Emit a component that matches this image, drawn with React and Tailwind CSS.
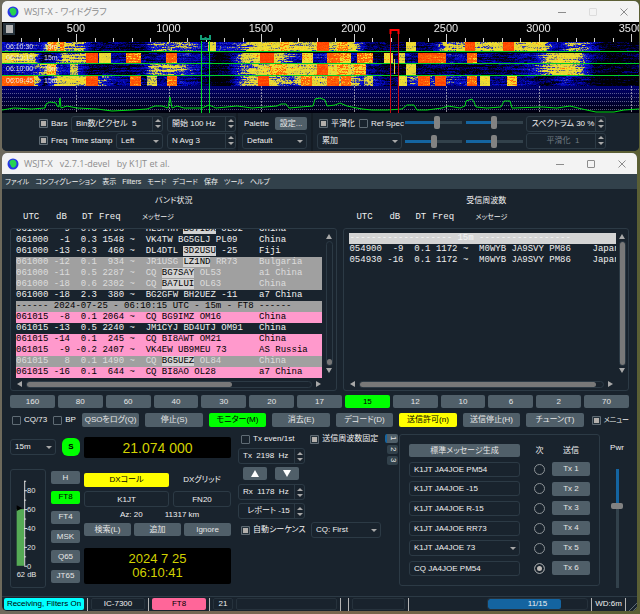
import React, { useEffect, useRef, useState } from 'react';

const CANVAS_W = 637;

// one entry per 15 s period: background level by x, then the strong signals
const STRIPS = [
    {
        top: 0, height: 9, label: '06:10:30',
        base: [[0, 0.34], [38, 0.36], [48, 0.6], [80, 0.5], [92, 0.2], [140, 0.16], [152, 0.5], [185, 0.48], [200, 0.32], [235, 0.38], [262, 0.64], [300, 0.58], [350, 0.6], [365, 0.2], [400, 0.12], [430, 0.2], [445, 0.56], [540, 0.6], [556, 0.26], [568, 0.5], [585, 0.42], [600, 0.12], [637, 0.08]],
        hot: [[46, 54, 0.78], [58, 61, 0.8], [206, 213, 0.6], [278, 286, 0.72], [315, 326, 0.95], [335, 345, 0.76], [404, 413, 0.62], [463, 472, 0.92], [501, 511, 0.95]],
    },
    {
        top: 11, height: 10, label: '06:10:15',
        base: [[0, 0.64], [32, 0.6], [40, 0.16], [50, 0.28], [62, 0.56], [84, 0.52], [96, 0.26], [120, 0.26], [150, 0.22], [180, 0.34], [205, 0.22], [215, 0.04], [225, 0.08], [240, 0.52], [262, 0.68], [278, 0.58], [296, 0.3], [330, 0.34], [360, 0.28], [380, 0.08], [400, 0.24], [440, 0.34], [458, 0.3], [500, 0.18], [530, 0.3], [545, 0.56], [560, 0.64], [575, 0.58], [590, 0.2], [605, 0.06], [637, 0.14]],
        hot: [[84, 95, 0.93], [97, 108, 0.6], [124, 138, 0.8], [164, 174, 0.84], [258, 271, 1], [300, 310, 0.68], [325, 337, 0.82], [338, 348, 0.74], [355, 370, 0.8], [382, 390, 0.66], [396, 402, 0.57], [416, 426, 0.9], [427, 443, 0.88], [465, 474, 0.82]],
    },
    {
        top: 22, height: 11, label: '06:10:00',
        base: [[0, 0.28], [30, 0.34], [45, 0.54], [60, 0.34], [75, 0.42], [90, 0.14], [125, 0.18], [143, 0.3], [150, 0.54], [180, 0.5], [200, 0.22], [212, 0.06], [225, 0.14], [240, 0.5], [270, 0.65], [300, 0.62], [350, 0.62], [368, 0.24], [400, 0.1], [430, 0.18], [500, 0.16], [530, 0.32], [548, 0.58], [565, 0.66], [578, 0.54], [592, 0.18], [606, 0.06], [637, 0.18]],
        hot: [[45, 53, 0.74], [68, 75, 0.56], [268, 284, 0.76], [315, 325, 0.9], [335, 345, 0.74], [352, 363, 0.76], [404, 413, 0.6]],
    },
    {
        top: 34, height: 10, label: '06:09:45',
        base: [[0, 0.7], [34, 0.62], [42, 0.14], [55, 0.58], [84, 0.6], [98, 0.44], [115, 0.26], [140, 0.22], [175, 0.3], [205, 0.18], [215, 0.02], [225, 0.06], [242, 0.54], [262, 0.63], [290, 0.42], [300, 0.62], [350, 0.54], [375, 0.28], [392, 0.12], [410, 0.46], [450, 0.36], [480, 0.28], [520, 0.3], [545, 0.1], [560, 0.32], [580, 0.22], [600, 0.02], [637, 0.06]],
        hot: [[0, 31, 0.86], [84, 95, 0.9], [128, 138, 0.86], [145, 154, 0.57], [165, 174, 0.8], [256, 266, 0.96], [299, 309, 0.82], [325, 336, 0.88], [339, 348, 0.84], [362, 370, 0.57], [396, 404, 0.62], [416, 427, 0.88], [433, 443, 0.94], [465, 474, 0.84], [478, 487, 0.64], [505, 514, 0.74]],
    },
];

const PALETTE = [[0, 0, 0, 0], [0.1, 0, 0, 8], [0.26, 0, 0, 140], [0.42, 10, 20, 225], [0.48, 100, 105, 130], [0.55, 220, 210, 60], [0.72, 250, 225, 45], [0.79, 255, 110, 10], [1, 255, 60, 0]];

const levelAt = (points, x) => {
    for (let i = 1; i < points.length; i++) {
        if (x <= points[i][0]) {
            const [x0, a] = points[i - 1];
            const [x1, b] = points[i];
            return a + ((b - a) * (x - x0)) / (x1 - x0);
        }
    }
    return points[points.length - 1][1];
};

const colorAt = (v) => {
    const c = Math.max(0, Math.min(1, v));
    for (let i = 1; i < PALETTE.length; i++) {
        if (c <= PALETTE[i][0]) {
            const p = PALETTE[i - 1];
            const q = PALETTE[i];
            const t = (c - p[0]) / (q[0] - p[0]);
            return [1, 2, 3].map((k) => p[k] + (q[k] - p[k]) * t);
        }
    }
    return [255, 60, 0];
};

const Waterfall = () => {
    const ref = useRef(null);

    useEffect(() => {
        const ctx = ref.current.getContext('2d');
        const img = ctx.createImageData(CANVAS_W, 44);
        let seed = 7;
        const rand = () => {
            seed = (seed * 1664525 + 1013904223) % 4294967296;
            return seed / 4294967296;
        };
        STRIPS.forEach(({ top, height, base, hot }) => {
            for (let y = top; y < top + height; y++) {
                let streak = 0;
                for (let x = 0; x < CANVAS_W; x++) {
                    if (rand() < 0.14) streak = (rand() - 0.5) * 0.22;
                    const band = hot.find(([a, b]) => x >= a && x <= b);
                    const level = band ? band[2] : levelAt(base, x);
                    const v = level + (band ? streak * 0.6 : streak) + (rand() - 0.5) * 0.15;
                    const [r, g, b] = colorAt(v);
                    img.data.set([r, g, b, 255], (y * CANVAS_W + x) * 4);
                }
            }
        });
        ctx.putImageData(img, 0, 0);
    }, []);

    return <canvas ref={ref} width={CANVAS_W} height={44} className="absolute top-5 left-0 w-full h-11 bg-black" />;
};

const SPECTRUM = [[0, 88], [12, 86], [30, 87], [43, 86], [44, 82], [48, 80], [54, 81], [55, 84], [57, 85], [58, 76], [59, 86], [65, 84], [75, 86], [95, 87], [110, 89], [130, 88], [145, 87], [153, 84], [160, 84], [166, 86], [168, 75], [170, 86], [175, 84], [182, 86], [200, 86], [207, 83], [214, 86], [235, 84], [250, 86], [275, 84], [279, 82], [284, 82], [287, 86], [311, 84], [313, 77], [318, 76], [323, 78], [325, 84], [333, 83], [338, 81], [345, 84], [360, 87], [370, 88], [385, 88], [400, 87], [405, 83], [412, 83], [415, 88], [425, 88], [440, 86], [446, 84], [458, 86], [463, 84], [464, 79], [470, 77], [472, 80], [474, 85], [485, 86], [499, 85], [502, 79], [508, 79], [510, 86], [540, 85], [555, 86], [568, 84], [580, 87], [594, 90], [612, 90], [622, 88], [637, 87]];

const WideGraph = () => {
    const hzToX = (hz) => 74 + (hz - 500) * 0.185;
    const ticks = Array.from({ length: 34 }, (_, i) => 200 + i * 100);
    const major = [500, 1000, 1500, 2000, 2500, 3000, 3500];
    const trace = SPECTRUM.map(([x, y]) => `${x},${y}`).join(' ');

    return (
        <div className="relative bg-black overflow-hidden">
            <Waterfall />
            <svg viewBox="0 0 637 91" className="relative block w-full" fontFamily="Liberation Sans, sans-serif">
                <defs>
                    <linearGradient id="spec" x1="0" y1="0" x2="0" y2="1">
                        <stop offset="0" stopColor="#00006e" />
                        <stop offset="1" stopColor="#00000c" />
                    </linearGradient>
                </defs>
                <rect x="1" y="1" width="12" height="12" fill="#26323b" />
                <rect x="4" y="3" width="7" height="8" fill="#b4b4b4" />
                {major.map((hz) => (
                    <text key={hz} x={hzToX(hz)} y="10" fontSize="11" fill="#e6e6e6" textAnchor="middle">{hz}</text>
                ))}
                {ticks.map((hz) => (
                    <rect key={hz} x={Math.round(hzToX(hz))} y={hz % 500 ? 16 : 12} width="1" height={hz % 500 ? 4 : 8} fill="#d0d0d0" />
                ))}
                {[29, 41, 53].map((y) => (
                    <rect key={y} x="0" y={y} width="637" height="1" fill="#00d228" />
                ))}
                {STRIPS.map((s) => (
                    <g key={s.label} fontSize="7" fill="#f0f0f0" opacity=".9">
                        <text x="4" y={s.top + 27}>{s.label}</text>
                        <text x="42" y={s.top + 27}>15m</text>
                    </g>
                ))}
                <rect x="0" y="64" width="637" height="27" fill="url(#spec)" />
                {[67, 71, 75, 79, 83, 87].map((y) => (
                    <path key={y} d={`M0 ${y}.5H637`} stroke="#8c8cb4" strokeDasharray="1 1" opacity=".65" />
                ))}
                {major.map((hz) => (
                    <path key={hz} d={`M${Math.round(hzToX(hz))}.5 64V91`} stroke="#c0c0c8" strokeDasharray="2 1" opacity=".7" />
                ))}
                <polyline points={trace} fill="none" stroke="#00dc14" strokeWidth="1" />
                <path d="M199.5 19V91M207.5 19V91" stroke="#00dc28" />
                <path d="M199 13v4h9v-4M203.500 17v-2" fill="none" stroke="#14a078" strokeWidth="2" />
                <path d="M388.500 8V91M396.500 8V91" stroke="#c80a14" />
                <path d="M388.500 12V8h8v4" fill="none" stroke="#ff0000" strokeWidth="2" />
                <path d="M392.500 37v15" stroke="#f0c83c" />
            </svg>
        </div>
    );
};

const Globe = () => (
    <svg viewBox="0 0 12 12" className="w-3 h-3 shrink-0">
        <circle cx="6" cy="6" r="5.500" fill="#2837e6" />
        <path d="M3.500 2.500C5 1 8 1.500 9 3.500c1 2 .5 4-1 5.500C6.500 10.500 4.500 9.500 4 8 3.500 6.500 2.500 6 2.500 4.500 2.500 3.500 3 3 3.500 2.500z" fill="#28d250" />
    </svg>
);

const TitleBar = ({ title, dimMax }) => (
    <header className="flex items-center h-[21px] pl-[5px] gap-[5px] bg-[#f3f3f3] text-[#8c8c8c]">
        <Globe />
        <h1 className="text-[9px] font-['Open_Sans','Noto_Sans_CJK_JP',sans-serif] whitespace-pre leading-none flex-1">{title}</h1>
        <div className="flex">
            <button aria-label="Minimize" className="w-[31px] flex justify-center">
                <svg viewBox="0 0 8 8" className="w-2 h-2"><path d="M0 4.500h8" stroke="currentColor" /></svg>
            </button>
            <button aria-label="Maximize" className={`w-[31px] flex justify-center ${dimMax ? 'text-[#dcdcdc]' : ''}`}>
                <svg viewBox="0 0 8 8" className="w-2 h-2"><rect x=".5" y=".5" width="7" height="7" rx=".5" fill="none" stroke="currentColor" /></svg>
            </button>
            <button aria-label="Close" className="w-[31px] flex justify-center">
                <svg viewBox="0 0 8 8" className="w-2 h-2"><path d="M.5.5l7 7M7.500.5l-7 7" stroke="currentColor" /></svg>
            </button>
        </div>
    </header>
);

const Check = ({ label, checked = false, className = '' }) => (
    <label className={`flex items-center gap-[3px] whitespace-nowrap ${className}`}>
        <input
            type="checkbox"
            defaultChecked={checked}
            className="appearance-none w-[9px] h-[9px] shrink-0 border border-[#5f6b74] rounded-[1px] checked:bg-[#b4b0ac] checked:shadow-[inset_0_0_0_1px_#26323b]"
        />
        {label}
    </label>
);

const Spin = ({ label, value, className = '', center = false, disabled = false }) => {
    const [text, setText] = useState(value);
    return (
        <span className={`flex h-4 border border-[#2c3a45] rounded-[3px] ${disabled ? 'text-[#6f7a82]' : ''} ${className}`}>
            <input
                aria-label={label}
                value={text}
                disabled={disabled}
                onChange={(e) => setText(e.target.value)}
                className={`flex-1 min-w-0 bg-transparent outline-none pl-1 ${center ? 'text-center' : ''}`}
            />
            <span className="flex flex-col justify-center gap-[3px] w-[10px] border-l border-[#2c3a45] text-[#a8a8a8]">
                <button aria-label={`${label} up`} className="flex justify-center">
                    <svg viewBox="0 0 6 3" className="w-[6px] h-[3px]"><path d="M0 3L3 0l3 3z" fill="currentColor" /></svg>
                </button>
                <button aria-label={`${label} down`} className="flex justify-center">
                    <svg viewBox="0 0 6 3" className="w-[6px] h-[3px]"><path d="M0 0l3 3 3-3z" fill="currentColor" /></svg>
                </button>
            </span>
        </span>
    );
};

const Select = ({ label, value, className = '' }) => (
    <span className={`relative flex h-4 ${className}`}>
        <select aria-label={label} className="appearance-none w-full min-w-0 pl-1 border border-[#2c3a45] rounded-[3px] bg-transparent outline-none">
            <option>{value}</option>
        </select>
        <svg viewBox="0 0 6 3" className="absolute right-[4px] top-[7px] w-[6px] h-[3px] pointer-events-none"><path d="M0 0l3 3 3-3z" fill="#a8a8a8" /></svg>
    </span>
);

const Btn = ({ children, className = '', tone = 'bg-[#505f69] text-[#e6e6e6]', ...rest }) => (
    <button className={`flex items-center justify-center rounded-[2px] whitespace-nowrap leading-none ${tone} ${className}`} {...rest}>
        {children}
    </button>
);

const GREEN = 'bg-[#00ff00] text-black';
const YELLOW = 'bg-[#ffff00] text-black';

const Slider = ({ label, value }) => {
    const [v, setV] = useState(value);
    return (
        <input
            type="range"
            aria-label={label}
            value={v}
            onChange={(e) => setV(Number(e.target.value))}
            style={{ backgroundImage: `linear-gradient(to right, #1464a0 ${v}%, #32414b ${v}%)` }}
            className="appearance-none w-[57px] h-[3px] [&::-webkit-slider-thumb]:appearance-none [&::-webkit-slider-thumb]:w-[6px] [&::-webkit-slider-thumb]:h-[13px] [&::-webkit-slider-thumb]:rounded-[2px] [&::-webkit-slider-thumb]:bg-[#828282]"
        />
    );
};

const PowerSlider = () => {
    const [v, setV] = useState(30);
    return (
        <input
            id="pwr"
            type="range"
            value={v}
            onChange={(e) => setV(Number(e.target.value))}
            style={{ backgroundImage: `linear-gradient(to bottom, #1464a0 ${v}%, #32414b ${v}%)` }}
            className="appearance-none mt-[15px] w-[3px] h-[119px] [writing-mode:vertical-lr] [&::-webkit-slider-thumb]:appearance-none [&::-webkit-slider-thumb]:w-[12px] [&::-webkit-slider-thumb]:h-[6px] [&::-webkit-slider-thumb]:rounded-[2px] [&::-webkit-slider-thumb]:bg-[#828282]"
        />
    );
};

const WideGraphControls = () => (
    <div className="flex pl-9 h-[38px] bg-[#19232d]">
        <div className="flex flex-col justify-center gap-[1px] w-[198px]">
            <div className="flex items-center gap-1">
                <span className="w-[28px] ml-[1px]"><Check label="Bars" checked /></span>
                <Spin label="Bins per pixel" value="Bin数/ピクセル  5" className="w-[92px]" />
                <Spin label="Start" value="開始 100 Hz" className="w-[69px]" />
            </div>
            <div className="flex items-center gap-1">
                <span className="w-[28px] ml-[1px]"><Check label="Freq" checked /></span>
                <span className="w-[41px] whitespace-nowrap">Time stamp</span>
                <Select label="Time stamp" value="Left" className="w-[47px]" />
                <Spin label="N Avg" value="N Avg 3" className="w-[69px]" />
            </div>
        </div>
        <div className="flex flex-col justify-center gap-[1px] px-1 w-[75px] border-l-2 border-[#141c24]">
            <div className="flex items-center justify-between h-4 pl-[2px]">
                <span>Palette</span>
                <Btn className="w-8 h-[13px]">設定...</Btn>
            </div>
            <Select label="Palette" value="Default" />
        </div>
        <div className="flex flex-col justify-center gap-[1px] pl-1 w-[93px] border-l-2 border-[#141c24]">
            <div className="flex items-center h-4 gap-1 pl-[2px]">
                <Check label="平滑化" checked />
                <Check label="Ref Spec" />
            </div>
            <Select label="Spectrum type" value="累加" className="w-[85px]" />
        </div>
        <div className="grid grid-cols-2 gap-x-1 items-center w-[118px] pl-[1px]">
            <Slider label="Gain" value={56} />
            <Slider label="Spectrum gain" value={50} />
            <Slider label="Zero" value={50} />
            <Slider label="Spectrum zero" value={50} />
        </div>
        <div className="flex flex-col justify-center gap-[1px] pl-1">
            <Spin label="Spectrum" value="スペクトラム 30 %" className="w-[80px]" center />
            <Spin label="Smoothing" value="平滑化  1" className="w-[80px]" center disabled />
        </div>
    </div>
);

const PINK = 'bg-[#ff99cc] text-black';
const GRAY = 'bg-[#a0a0a0] text-[#dcdcdc]';

// utc, dB, DT, Freq, [before, call, after], country, row colours
const BAND_ROWS = [
    ['061000', '9', '0.3', '1796', ['HL5FHH ', 'BG7IDX', ' OL62'], '   China', ''],
    ['061000', '-1', '0.3', '1548', ['VK4TW BG5GLJ PL09', '', ''], '   China', ''],
    ['061000', '-13', '-0.3', '460', ['DL4DTL ', '3D2USU', ' -25'], '   Fiji', ''],
    ['061000', '-12', '0.1', '934', ['JR1USG ', 'LZ1ND', ' RR73'], '   Bulgaria', GRAY],
    ['061000', '-11', '0.5', '2287', ['CQ ', 'BG7SAY', ' OL53'], '   a1 China', GRAY],
    ['061000', '-18', '0.6', '2302', ['CQ ', 'BA7LUI', ' OL63'], '   China', GRAY],
    ['061000', '-18', '2.3', '380', ['BG2GFW BH2UEZ -11', '', ''], '   a7 China', ''],
    ['sep', '------ 2024-07-25 - 06:10:15 UTC - 15m - FT8 ------', 'bg-[#a0a0a0] text-black'],
    ['061015', '-8', '0.1', '2064', ['CQ BG9IMZ OM16', '', ''], '   China', PINK],
    ['061015', '-13', '0.5', '2240', ['JM1CYJ BD4UTJ OM91', '', ''], '   China', ''],
    ['061015', '-14', '0.1', '245', ['CQ BI8AWT OM21', '', ''], '   China', PINK],
    ['061015', '-9', '-0.2', '2407', ['VK4EW UB9MEU 73', '', ''], '   AS Russia', PINK],
    ['061015', '8', '0.1', '1490', ['CQ ', 'BG5UEZ', ' OL84'], '   China', GRAY],
    ['061015', '-16', '0.1', '644', ['CQ BI8AO OL28', '', ''], '   a7 China', PINK],
];

const RX_ROWS = [
    ['sep', '------------------- 15m -----------------', 'bg-[#d4d4d4] text-[#f5f5f5]'],
    ['054900', '-9', '0.1', '1172', ['M0WYB JA9SVY PM86', '', ''], '    Japan', ''],
    ['054930', '-16', '0.1', '1172', ['M0WYB JA9SVY PM86', '', ''], '    Japan', ''],
];

const DecodeTable = ({ rows, label }) => (
    <table aria-label={label} className="w-full border-collapse font-['Liberation_Mono',monospace] text-[9px] leading-[11px] whitespace-pre">
        <tbody>
            {rows.map((r, i) =>
                r[0] === 'sep' ? (
                    <tr key={i} className={r[2]}>
                        <td colSpan={6} className="p-0">{r[1]}</td>
                    </tr>
                ) : (
                    <tr key={i} className={r[6]}>
                        <td className="p-0">{r[0]}</td>
                        <td className="p-0">{r[1].padStart(4)}</td>
                        <td className="p-0">{r[2].padStart(5)}</td>
                        <td className="p-0">{r[3].padStart(5)}</td>
                        <td className="p-0">
                            {' ~  '}{r[4][0]}
                            {r[4][1] && <span className="bg-[#d2d2d2] text-black">{r[4][1]}</span>}
                            {r[4][2]}
                        </td>
                        <td className="p-0 w-full">{r[5]}</td>
                    </tr>
                )
            )}
        </tbody>
    </table>
);

const Arrow = ({ d }) => (
    <svg viewBox="0 0 6 6" className="w-[6px] h-[6px] shrink-0"><path d={d} fill="#a8a8a8" /></svg>
);

const DecodePane = ({ title, rows, bottom, full }) => (
    <section className="flex flex-col min-w-0">
        <h2 className="text-center leading-[12px] pt-[6px]">{title}</h2>
        <div className="flex items-center pl-[13px] h-[21px] pt-1 pb-[5px] font-['Liberation_Mono',monospace] text-[9px]">
            <span className="w-[33px]">UTC</span>
            <span className="w-[26px]">dB</span>
            <span className="w-[17px]">DT</span>
            <span className="w-[43px]">Freq</span>
            <span className="text-[7px] font-['Liberation_Sans','Noto_Sans_CJK_JP',sans-serif]">メッセージ</span>
        </div>
        <div className="border border-[#2c3a45] rounded-[3px] pl-[5px]">
            <div className="flex h-[149px]">
                <div className={`flex flex-1 min-w-0 overflow-hidden ${bottom ? 'items-end' : 'items-start pt-1'}`}>
                    <DecodeTable rows={rows} label={title} />
                </div>
                <div className={`flex flex-col items-center py-1 ${full ? 'w-[12px]' : 'w-[14px]'}`}>
                    <Arrow d="M0 6l3-5 3 5z" />
                    <div className={`flex flex-col w-[7px] flex-1 my-[2px] border border-[#2c3a45] rounded-full ${full ? '' : 'justify-end'}`}>
                        <div className={`rounded-full bg-[#787878] ${full ? 'h-full' : 'h-[6px]'}`}></div>
                    </div>
                    <Arrow d="M0 0l3 5 3-5z" />
                </div>
            </div>
            <div className="flex items-center gap-1 h-[12px] pr-[14px]">
                <Arrow d="M6 0L1 3l5 3z" />
                <div className="flex-1 h-[7px] border border-[#2c3a45] rounded-full">
                    <div className={`h-full rounded-full bg-[#787878] ${full ? 'w-[97%]' : 'w-[72%]'}`}></div>
                </div>
                <Arrow d="M0 0l5 3-5 3z" />
            </div>
        </div>
    </section>
);

const Meter = () => (
    <svg viewBox="0 0 36 119" className="w-9 h-[119px] border border-[#2c3a45] rounded-[3px]" fontSize="8" fill="#e6e6e6">
        <rect x="6" y="39" width="8" height="60" fill="#55aa55" />
        <path d="M14.500 9v90" stroke="#e6e6e6" />
        {[80, 60, 40, 20, 0].map((n, i) => (
            <g key={n}>
                <path d={`M14 ${19.5 + i * 20}h3`} stroke="#e6e6e6" />
                <text x="17" y={22 + i * 20}>{n}</text>
            </g>
        ))}
        {[9.5, 29.5, 49.5, 69.5, 89.5].map((y) => (
            <path key={y} d={`M14 ${y}h2`} stroke="#e6e6e6" />
        ))}
        <path d="M6 35l6 3-6 3z" fill="#000" />
        <text x="6" y="111">62 dB</text>
    </svg>
);

const TX_MESSAGES = ['K1JT JA4JOE PM54', 'K1JT JA4JOE -15', 'K1JT JA4JOE R-15', 'K1JT JA4JOE RR73', 'K1JT JA4JOE 73', 'CQ JA4JOE PM54'];

const TxPanel = () => {
    const [next, setNext] = useState(5);
    return (
        <section className="flex-1 min-w-0 h-[152px] px-[9px] py-[9px] border border-[#2c3a45] rounded-[3px]">
            <div className="flex flex-col justify-between h-[132px]">
                <div className="flex items-center">
                    <Btn className="flex-1 h-[13px]">標準メッセージ生成</Btn>
                    <span className="w-8 pl-[7px] text-center">次</span>
                    <span className="w-[38px] text-center">送信</span>
                </div>
                {TX_MESSAGES.map((msg, i) => (
                    <div key={msg} className="flex items-center">
                        {i === 4 ? (
                            <Select label="Tx 5 message" value={msg} className="flex-1 min-w-0" />
                        ) : (
                            <input aria-label={`Tx ${i + 1} message`} defaultValue={msg} className="flex-1 min-w-0 h-[15px] pl-1 border border-[#2c3a45] rounded-[3px] bg-transparent outline-none" />
                        )}
                        <span className="flex justify-center w-8 pl-[7px]">
                            <input
                                type="radio"
                                name="next"
                                aria-label={`Next Tx ${i + 1}`}
                                checked={next === i}
                                onChange={() => setNext(i)}
                                className="appearance-none w-[11px] h-[11px] rounded-full border border-[#8c9296] checked:bg-[#c0bcb8] checked:shadow-[inset_0_0_0_2px_#19232d]"
                            />
                        </span>
                        <Btn className="w-[38px] h-[14px]">Tx {i + 1}</Btn>
                    </div>
                ))}
            </div>
        </section>
    );
};

const Bar = () => <span className="w-px h-[13px] bg-[#b4b4b4]"></span>;

const StatusBar = () => (
    <footer className="flex items-center h-[15px] gap-[3px] pl-[2px] border-t border-[#2c3a45]">
        <span className="flex items-center justify-center w-[80px] h-[12px] rounded-[2px] bg-[#00ffff] text-black whitespace-nowrap">Receiving, Filters On</span>
        <Bar />
        <span className="flex items-center justify-center w-[54px] h-[12px] rounded-[2px] border border-[#26323c]">IC-7300</span>
        <Bar />
        <span className="flex items-center justify-center w-[54px] h-[12px] rounded-[2px] bg-[#ff6699] text-black">FT8</span>
        <Bar />
        <span className="flex items-center justify-center w-[20px] h-[12px] rounded-[2px] border border-[#26323c]">21</span>
        <span className="w-[101px] h-[12px] rounded-[2px] border border-[#26323c]"></span>
        <Bar />
        <span className="w-[1px]"></span>
        <Bar />
        <span className="w-[53px] h-[12px] rounded-[2px] border border-[#26323c]"></span>
        <Bar />
        <span className="flex-1"></span>
        <span className="relative flex items-center justify-center w-[101px] h-[12px] rounded-[3px] border border-[#26323c] overflow-hidden">
            <span className="absolute inset-y-0 left-0 bg-[#1464a0] rounded-[2px]" style={{ width: `${(11 / 15) * 100}%` }}></span>
            <span className="relative">11/15</span>
        </span>
        <Bar />
        <span className="w-[27px] text-center whitespace-nowrap">WD:6m</span>
        <Bar />
        <svg viewBox="0 0 8 8" className="w-2 h-2 self-end"><path d="M0 8l8-8M4 8l4-4" stroke="#5f6b74" /></svg>
    </footer>
);

const BANDS = ['160', '80', '60', '40', '30', '20', '17', '15', '12', '10', '6', '2', '70'];
const ACTIONS = ['QSOをログ(Q)', '停止(S)', 'モニター(M)', '消去(E)', 'デコード(D)', '送信許可(n)', '送信停止(H)', 'チューン(T)'];
const MODES = ['H', 'FT8', 'FT4', 'MSK', 'Q65', 'JT65'];
const MENUS = ['ファイル', 'コンフィグレーション', '表示', 'Filters', 'モード', 'デコード', '保存', 'ツール', 'ヘルプ'];

const MainWindow = () => (
    <main className="mr-[2px] rounded-[5px] overflow-hidden bg-[#19232d]">
        <TitleBar title="WSJT-X   v2.7.1-devel   by K1JT et al." />
        <nav className="flex items-center h-[15px] pl-[3px] gap-[6px] bg-[#32414b] text-[7px]">
            {MENUS.map((m) => (
                <button key={m} className="whitespace-nowrap leading-none">{m}</button>
            ))}
        </nav>

        <div className="px-2">
            <div className="grid grid-cols-[328fr_286fr] gap-[6px]">
                <DecodePane title="バンド状況" rows={BAND_ROWS} bottom />
                <DecodePane title="受信周波数" rows={RX_ROWS} full />
            </div>

            <div className="flex gap-[3px] mt-1">
                {BANDS.map((b) => (
                    <Btn key={b} className="flex-1 h-[13px]" tone={b === '15' ? GREEN : undefined}>{b}</Btn>
                ))}
            </div>

            <div className="flex items-center gap-[6px] mt-[5px]">
                <span className="pl-[2px]"><Check label="CQ/73" /></span>
                <Check label="BP" />
                {ACTIONS.map((a, i) => (
                    <Btn key={a} className="flex-1 basis-0 h-[14px]" tone={i === 2 ? GREEN : i === 5 ? YELLOW : undefined}>{a}</Btn>
                ))}
                <span className="pl-[2px]"><Check label="メニュー" className="text-[7px]" checked /></span>
            </div>

            <div className="flex mt-[7px] h-[162px]">
                <div className="w-[70px] shrink-0 pt-1">
                    <div className="flex items-center justify-between">
                        <Select label="Band" value="15m" className="w-[46px]" />
                        <Btn tone={GREEN} className="w-[18px] h-[18px] rounded-[6px] font-bold">S</Btn>
                    </div>
                    <div className="flex justify-between mt-[13px]">
                        <Meter />
                        <div className="flex flex-col justify-between w-[29px] h-[114px] pt-[2px]">
                            {MODES.map((m) => (
                                <Btn key={m} className="h-[13px]" tone={m === 'FT8' ? GREEN : undefined}>{m}</Btn>
                            ))}
                        </div>
                    </div>
                </div>

                <div className="w-[147px] shrink-0 ml-1 pt-[3px]">
                    <div className="flex items-center justify-center h-[21px] rounded-[2px] bg-black text-[#d2d200] text-[14px]">21.074 000</div>
                    <div className="flex gap-1 mt-[15px]">
                        <Btn tone={YELLOW} className="w-[85px] h-[14px]">DXコール</Btn>
                        <label htmlFor="dxgrid" className="flex-1 text-center leading-[14px]">DXグリッド</label>
                    </div>
                    <div className="flex gap-1 mt-1">
                        <input aria-label="DX call" defaultValue="K1JT" className="w-[85px] h-4 border border-[#2c3a45] rounded-[3px] bg-transparent text-center outline-none" />
                        <input id="dxgrid" defaultValue="FN20" className="flex-1 min-w-0 h-4 border border-[#2c3a45] rounded-[3px] bg-transparent text-center outline-none" />
                    </div>
                    <div className="flex gap-[22px] pl-9 mt-[2px] leading-[12px]">
                        <span>Az: 20</span>
                        <span>11317 km</span>
                    </div>
                    <div className="flex gap-[3px] mt-[2px]">
                        <Btn className="flex-1 h-[13px]">検索(L)</Btn>
                        <Btn className="flex-1 h-[13px]">追加</Btn>
                        <Btn className="flex-1 h-[13px]">Ignore</Btn>
                    </div>
                    <div className="mt-3 py-[4px] rounded-[2px] bg-black text-[#d2d200] text-[13px] leading-[14px] text-center">
                        <p>2024 7 25</p>
                        <p>06:10:41</p>
                    </div>
                </div>

                <div className="w-[168px] shrink-0 pl-[7px]">
                    <div className="flex">
                        <div className="w-[147px]">
                            <div className="flex items-center gap-4 h-[10px] pl-[3px]">
                                <Check label="Tx even/1st" />
                                <Check label="送信周波数固定" checked />
                            </div>
                            <Spin label="Tx frequency" value="Tx  2198  Hz" className="w-[67px] mt-1" />
                            <div className="flex justify-between w-[56px] ml-[5px] mt-[3px]">
                                <Btn aria-label="Rx to Tx" className="w-[24px] h-[13px]"><svg viewBox="0 0 8 7" className="w-2 h-[7px]"><path d="M0 7l4-7 4 7z" fill="#fff" /></svg></Btn>
                                <Btn aria-label="Tx to Rx" className="w-[24px] h-[13px]"><svg viewBox="0 0 8 7" className="w-2 h-[7px]"><path d="M0 0l4 7 4-7z" fill="#fff" /></svg></Btn>
                            </div>
                            <Spin label="Rx frequency" value="Rx  1178  Hz" className="w-[67px] mt-1" />
                            <Spin label="Report" value="レポート -15" className="w-[67px] mt-[3px]" center />
                            <div className="flex items-center justify-between mt-[3px] pl-[3px] w-[143px]">
                                <Check label="自動シーケンス" checked />
                                <Select label="CQ" value="CQ: First" className="w-[70px]" />
                            </div>
                        </div>
                        <div className="flex flex-col gap-[2px] w-[13px] items-end">
                            <Btn className="w-[13px] h-[9px] border-l-2 border-[#1464a0]"><span className="[writing-mode:vertical-rl]">1</span></Btn>
                            <Btn className="w-[11px] h-[9px]" tone="bg-[#32414b] text-[#e6e6e6]"><span className="[writing-mode:vertical-rl]">2</span></Btn>
                            <Btn className="w-[11px] h-[9px]" tone="bg-[#32414b] text-[#e6e6e6]"><span className="[writing-mode:vertical-rl]">3</span></Btn>
                        </div>
                    </div>
                </div>

                <TxPanel />

                <div className="flex flex-col items-center w-[29px] shrink-0 pt-2 pl-[5px]">
                    <label htmlFor="pwr" className="leading-[12px]">Pwr</label>
                    <PowerSlider />
                </div>
            </div>
        </div>
        <StatusBar />
    </main>
);

const App = () => (
    <div className="min-h-screen pl-[2px] pr-px pt-px bg-linear-to-r from-[#6e6a5c] via-[#7c6650] to-[#5a5f34] font-['Liberation_Sans','Noto_Sans_CJK_JP',sans-serif] [font-feature-settings:'palt'] text-[8px] leading-[10px] text-[#f0f0f0]">
        <section className="mb-[2px] rounded-[5px] overflow-hidden bg-[#19232d]">
            <TitleBar title="WSJT-X - ワイドグラフ" dimMax />
            <WideGraph />
            <WideGraphControls />
        </section>
        <MainWindow />
    </div>
);

export default App;
